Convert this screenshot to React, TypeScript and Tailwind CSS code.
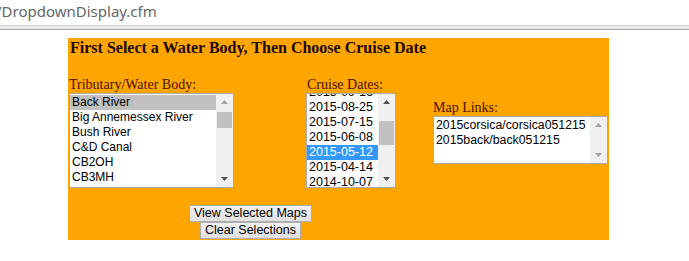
import React from "react";

const tributaries = ["Back River", "Big Annemessex River", "Bush River", "C&D Canal", "CB2OH", "CB3MH"];
const cruiseDates = ["2015-09-16", "2015-08-25", "2015-07-15", "2015-06-08", "2015-05-12", "2015-04-14", "2014-10-07"];
const mapLinks = ["2015corsica/corsica051215", "2015back/back051215"];

const Arrow = ({ up, color }: { up?: boolean; color: string }) => (
    <svg width="7" height="4" viewBox="0 0 7 4">
        {up ? <polygon points="0,4 7,4 3.5,0" fill={color} /> : <polygon points="0,0 7,0 3.5,4" fill={color} />}
    </svg>
);

type BarProps = { thumbTop?: number; thumbHeight?: number; upColor: string; downColor: string };

const ScrollBar = ({ thumbTop, thumbHeight, upColor, downColor }: BarProps) => (
    <div className="relative w-[17px] h-full bg-[#f0f0f0] flex flex-col items-center justify-between py-[6px]">
        <Arrow up color={upColor} />
        {thumbHeight !== undefined && (
            <div className="absolute left-[1px] w-[15px] bg-[#c1c1c1]" style={{ top: thumbTop, height: thumbHeight }} />
        )}
        <Arrow color={downColor} />
    </div>
);

const App: React.FC = () => {
    return (
        <div className="w-[689px] h-[261px] bg-white overflow-hidden">
            {/* browser address bar */}
            <div className="h-[25px] pt-[1px] -ml-[4px] text-[15px] leading-[20px] text-[#666666] font-['Noto_Sans',sans-serif]">
                /DropdownDisplay.cfm
            </div>
            <div className="h-[5px] border-t border-[#d0d0d0] border-b border-b-[#a8a8a8] bg-[#ececec]" />

            <div className="ml-[68px] mt-[8px] w-[541px] bg-[#ffa500] pb-[1px] font-['Liberation_Serif',serif]">
                <div className="pl-[2px] pt-[1px] h-[39px] text-[16px] leading-[17px] font-bold text-[#1c0600]">
                    First Select a Water Body, Then Choose Cruise Date
                </div>

                <div className="grid grid-cols-[238px_127px_176px]">
                    {/* tributaries */}
                    <div className="pl-[1px]">
                        <div className="h-[16px] text-[14px] leading-[16px] text-[#4a1200]">Tributary/Water Body:</div>
                        <div className="flex w-[165px] h-[95px] border border-[#a9a9a9] bg-white overflow-hidden">
                            <div className="flex-1 pt-[1px] font-['Liberation_Sans',sans-serif] text-[12px] leading-[15px] text-black">
                                {tributaries.map((name, i) => (
                                    <div key={name} className={`pl-[2px] h-[15px] whitespace-nowrap ${i === 0 ? "bg-[#c0c0c0]" : ""}`}>
                                        {name}
                                    </div>
                                ))}
                            </div>
                            <ScrollBar thumbTop={18} thumbHeight={16} upColor="#a3a3a3" downColor="#505050" />
                        </div>
                    </div>

                    {/* cruise dates */}
                    <div>
                        <div className="h-[16px] pl-[1px] text-[14px] leading-[16px] text-[#4a1200]">Cruise Dates:</div>
                        <div className="flex w-[90px] h-[95px] border border-[#a9a9a9] bg-white overflow-hidden">
                            <div className="flex-1 overflow-hidden font-['Liberation_Sans',sans-serif] text-[12.5px] leading-[15px] text-black">
                                <div className="-mt-[9px]">
                                    {cruiseDates.map((date, i) => (
                                        <div key={date} className={`pl-[2px] h-[15px] ${i === 4 ? "bg-[#3399ff] text-white" : ""}`}>
                                            {date}
                                        </div>
                                    ))}
                                </div>
                            </div>
                            <ScrollBar thumbTop={27} thumbHeight={24} upColor="#505050" downColor="#505050" />
                        </div>
                    </div>

                    {/* map links */}
                    <div className="flex flex-col justify-center pb-[1px]">
                        <div className="h-[16px] text-[14px] leading-[16px] text-[#4a1200]">Map Links:</div>
                        <div className="flex w-[175px] h-[48px] border border-[#a9a9a9] bg-white overflow-hidden">
                            <div className="flex-1 pt-[1px] font-['Liberation_Sans',sans-serif] text-[12.3px] leading-[15px] text-black">
                                {mapLinks.map((link) => (
                                    <div key={link} className="pl-[2px] h-[15px] whitespace-nowrap">
                                        {link}
                                    </div>
                                ))}
                            </div>
                            <ScrollBar upColor="#a3a3a3" downColor="#a3a3a3" />
                        </div>
                    </div>
                </div>

                {/* buttons */}
                <div className="w-[365px] mt-[17px] flex flex-col items-center font-['Liberation_Sans',sans-serif]">
                    <button className="h-[17px] px-[4px] text-[12.5px] leading-[15px] text-black bg-gradient-to-b from-[#f2f2f2] to-[#e0e0e0] border border-[#adadad]">
                        View Selected Maps
                    </button>
                    <button className="h-[17px] px-[4px] text-[12.5px] leading-[15px] text-black bg-gradient-to-b from-[#f2f2f2] to-[#e0e0e0] border border-[#adadad]">
                        Clear Selections
                    </button>
                </div>
            </div>
        </div>
    );
};

export default App;
